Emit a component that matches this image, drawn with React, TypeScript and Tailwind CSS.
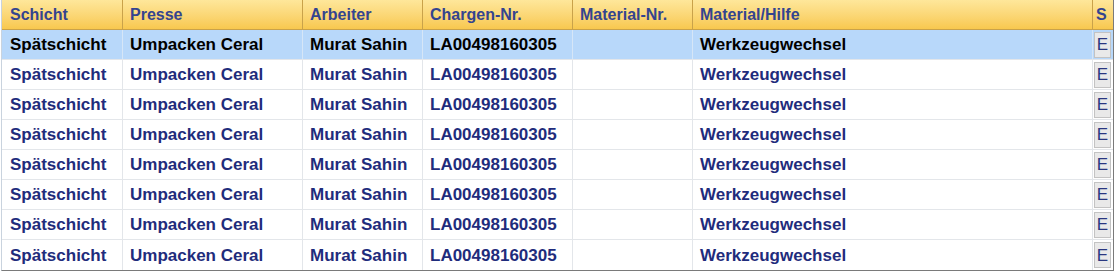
import React from 'react';

interface Column {
  key: string;
  label: string;
  width: string;
}

const columns: Column[] = [
  { key: 'schicht', label: 'Schicht', width: 'w-[120px]' },
  { key: 'presse', label: 'Presse', width: 'w-[180px]' },
  { key: 'arbeiter', label: 'Arbeiter', width: 'w-[120px]' },
  { key: 'charge', label: 'Chargen-Nr.', width: 'w-[150px]' },
  { key: 'matnr', label: 'Material-Nr.', width: 'w-[120px]' },
  { key: 'hilfe', label: 'Material/Hilfe', width: 'w-[400px]' },
];

const row = {
  schicht: 'Spätschicht',
  presse: 'Umpacken Ceral',
  arbeiter: 'Murat Sahin',
  charge: 'LA00498160305',
  matnr: '',
  hilfe: 'Werkzeugwechsel',
};

const rows = Array.from({ length: 8 }, () => row);

export default function App() {
  return (
    <div className="w-[1118px] h-[273px] bg-white font-['Liberation_Sans',Arial,sans-serif] overflow-hidden">
      <div className="ml-[1px] w-[1113px] border-l border-[#c9d3de] border-b border-b-[#7a7a7a] border-r border-r-[#7a7a7a]">
        {/* header */}
        <div className="flex h-[30px] pl-[1px] border-b border-[#c9a24a] bg-gradient-to-b from-[#fee79a] to-[#f8c84e]">
          {columns.map((col) => (
            <div
              key={col.key}
              className={`${col.width} shrink-0 border-r border-[#c9a24a] pl-[7px] pt-[1px] flex items-center text-[16px] font-bold text-[#34448f] whitespace-nowrap overflow-hidden`}
            >
              {col.label}
            </div>
          ))}
          <div className="w-[19px] shrink-0 pl-[3px] pt-[1px] flex items-center text-[16px] font-bold text-[#34448f] overflow-hidden">
            S
          </div>
        </div>

        {/* rows */}
        {rows.map((r, i) => {
          const selected = i === 0;
          return (
            <div
              key={i}
              className={`flex h-[30px] pl-[1px] ${i < rows.length - 1 ? 'border-b border-[#e3e6ea]' : ''} ${selected ? 'bg-[#b8d8fa] text-black' : 'bg-white text-[#1f2c7c]'}`}
            >
              {columns.map((col) => (
                <div
                  key={col.key}
                  className={`${col.width} shrink-0 border-r ${selected ? 'border-[#d6e6f7]' : 'border-[#e3e6ea]'} pl-[7px] pt-[1px] flex items-center text-[17px] font-bold whitespace-nowrap overflow-hidden`}
                >
                  {r[col.key as keyof typeof r]}
                </div>
              ))}
              <div className="w-[19px] shrink-0 flex items-center justify-start pl-[1px]">
                <button className="w-[17px] h-[26px] bg-[#e9e9e9] border border-[#c3c3c3] flex items-center justify-center text-[17px] text-[#2a3780] leading-none">
                  E
                </button>
              </div>
            </div>
          );
        })}
      </div>
    </div>
  );
}
